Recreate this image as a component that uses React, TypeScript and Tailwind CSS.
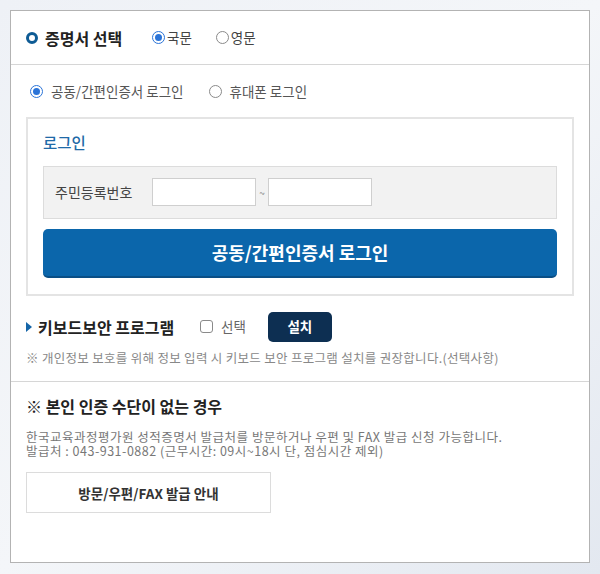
const font = { fontFamily: '"Noto Sans CJK KR", "Noto Sans", sans-serif' }

function Radio({ checked, label, className = '' }: { checked?: boolean; label: string; className?: string }) {
  return (
    <label className={`flex items-center ${className}`}>
      <span
        className={
          checked
            ? 'w-[13px] h-[13px] rounded-full border border-[#2b74d8] flex items-center justify-center bg-white'
            : 'w-[13px] h-[13px] rounded-full border border-[#8a8a8a] bg-white'
        }
      >
        {checked && <span className="w-[7px] h-[7px] rounded-full bg-[#2b74d8]" />}
      </span>
      <span>{label}</span>
    </label>
  )
}

export default function App() {
  return (
    <div
      className="w-[600px] h-[574px] p-[10px] bg-gradient-to-br from-[#eef1f6] via-[#f4f6f9] to-[#e3e8f0]"
      style={font}
    >
      <div className="h-[553px] bg-white border border-[#b3b3b3] flex flex-col">
        {/* Header */}
        <div className="h-[54px] flex items-center px-[15px] border-b border-[#d6d6d6] shrink-0">
          <span className="w-[12px] h-[12px] rounded-full border-[3px] border-[#0e5b94]" />
          <h1 className="ml-[7px] w-[107px] text-[16px] font-bold text-[#222]">증명서 선택</h1>
          <div className="flex items-center gap-[24px] text-[13.5px] text-[#444]">
            <Radio checked label="국문" className="gap-[2px]" />
            <Radio label="영문" className="gap-[2px]" />
          </div>
        </div>

        {/* Login */}
        <div className="px-[15px] pt-[16px] pb-[14px] border-b border-[#d6d6d6]">
          <div className="flex items-center gap-[25px] text-[13.5px] text-[#555] pl-[4px]">
            <Radio checked label="공동/간편인증서 로그인" className="gap-[8px]" />
            <Radio label="휴대폰 로그인" className="gap-[8px]" />
          </div>

          <div className="mt-[16px] border-2 border-[#e4e4e4] px-[15px] pt-[12px] pb-[16px]">
            <h2 className="text-[15.5px] text-[#1f6aa8] font-medium">로그인</h2>
            <div className="mt-[11px] h-[53px] bg-[#f2f2f2] border border-[#dcdcdc] flex items-center px-[11px]">
              <span className="w-[97px] text-[14px] text-[#444]">주민등록번호</span>
              <input className="w-[104px] h-[28px] bg-white border border-[#cfcfcf]" />
              <span className="w-[12px] text-center text-[10px] text-[#888]">~</span>
              <input className="w-[104px] h-[28px] bg-white border border-[#cfcfcf]" />
            </div>
            <button className="mt-[10px] w-full h-[49px] rounded-[5px] bg-[#0b66ab] border-b-2 border-[#0a4f86] text-white text-[18px] font-bold">
              공동/간편인증서 로그인
            </button>
          </div>

          <div className="mt-[16px] flex items-center">
            <span className="w-0 h-0 border-y-[5px] border-y-transparent border-l-[6px] border-l-[#1565a8]" />
            <span className="ml-[6px] w-[162px] text-[16px] font-bold text-[#222]">키보드보안 프로그램</span>
            <label className="flex items-center gap-[8px] text-[13.5px] text-[#666]">
              <span className="w-[13px] h-[13px] rounded-[3px] border border-[#8a8a8a] bg-white" />
              선택
            </label>
            <button className="ml-[22px] w-[64px] h-[30px] rounded-[5px] bg-[#0d2f52] text-white text-[13.5px] font-bold">
              설치
            </button>
          </div>
          <p className="mt-[7px] text-[12.5px] text-[#888] tracking-[0.3px]">
            ※ 개인정보 보호를 위해 정보 입력 시 키보드 보안 프로그램 설치를 권장합니다.(선택사항)
          </p>
        </div>

        {/* No auth */}
        <div className="px-[15px] pt-[12px]">
          <h2 className="text-[16px] font-bold text-[#222]">※ 본인 인증 수단이 없는 경우</h2>
          <div className="mt-[12px] text-[12.5px] leading-[14px] text-[#777] tracking-[0.5px]">
            <p>한국교육과정평가원 성적증명서 발급처를 방문하거나 우편 및 FAX 발급 신청 가능합니다.</p>
            <p>발급처 : 043-931-0882 (근무시간: 09시~18시 단, 점심시간 제외)</p>
          </div>
          <button className="mt-[14px] w-[245px] h-[41px] border border-[#dcdcdc] bg-white text-[13.5px] font-bold text-[#333]">
            방문/우편/FAX 발급 안내
          </button>
        </div>
      </div>
    </div>
  )
}
